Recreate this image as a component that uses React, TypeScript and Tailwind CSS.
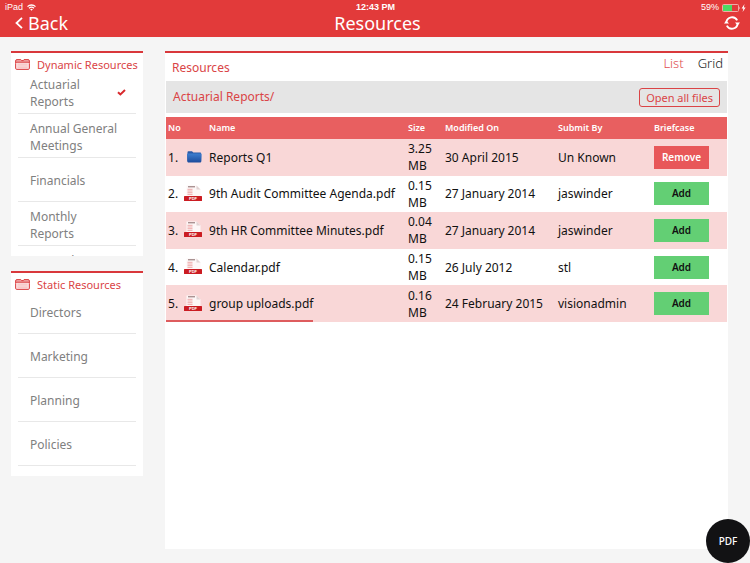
import { useState } from 'react';
import { clsx } from 'clsx';

type FileRow = {
  name: string;
  kind: 'folder' | 'pdf';
  size: string;
  modified: string;
  submitBy: string;
  inBriefcase: boolean;
};

const dynamicItems = ['Actuarial Reports', 'Annual General Meetings', 'Financials', 'Monthly Reports', 'General Documents'];
const staticItems = ['Directors', 'Marketing', 'Planning', 'Policies'];

const initialFiles: FileRow[] = [
  { name: 'Reports Q1', kind: 'folder', size: '3.25 MB', modified: '30 April 2015', submitBy: 'Un Known', inBriefcase: true },
  { name: '9th Audit Committee Agenda.pdf', kind: 'pdf', size: '0.15 MB', modified: '27 January 2014', submitBy: 'jaswinder', inBriefcase: false },
  { name: '9th HR Committee Minutes.pdf', kind: 'pdf', size: '0.04 MB', modified: '27 January 2014', submitBy: 'jaswinder', inBriefcase: false },
  { name: 'Calendar.pdf', kind: 'pdf', size: '0.15 MB', modified: '26 July 2012', submitBy: 'stl', inBriefcase: false },
  { name: 'group uploads.pdf', kind: 'pdf', size: '0.16 MB', modified: '24 February 2015', submitBy: 'visionadmin', inBriefcase: false },
];

function WifiIcon() {
  return (
    <svg width="9" height="7" viewBox="0 0 18 14" fill="none" stroke="#fff" strokeWidth="2.6">
      <path d="M1 5.2a11.5 11.5 0 0 1 16 0M4 8.6a7.2 7.2 0 0 1 10 0" />
      <path d="M9 13.5 6.2 10.7a4 4 0 0 1 5.6 0z" fill="#fff" stroke="none" />
    </svg>
  );
}

function BatteryIcon() {
  return (
    <svg width="24" height="8" viewBox="0 0 24 8">
      <rect x="0.5" y="0.5" width="16" height="7" rx="1" fill="none" stroke="#f4a9a6" />
      <rect x="1" y="1" width="9" height="6" fill="#4cd964" />
      <path d="M17.5 2.5q1.2 1.5 0 3z" fill="#fff" />
      <path d="M22.5 0 19.6 4.4h1.8L20.6 8l3-4.6h-1.8z" fill="#fff" />
    </svg>
  );
}

function RefreshIcon() {
  return (
    <svg width="16" height="14" viewBox="0 0 16 14" fill="none" stroke="#fff" strokeWidth="1.8">
      <path d="M2.3 6.4A5.8 5.8 0 0 1 13.2 4.4" />
      <path d="M13.7 7.6A5.8 5.8 0 0 1 2.8 9.6" />
      <path d="M0 7.6 2.3 4.4 5 7.6zM11 6.4l2.7 3.2L16 6.4z" fill="#fff" stroke="none" />
    </svg>
  );
}

function CaseIcon() {
  return (
    <svg width="15" height="11" viewBox="0 0 15 11" fill="none" stroke="#da3f41">
      <path d="M.6 4V2Q.6.6 2 .6h3.800l.8 1h1.800l.6-1H13Q14.400.6 14.400 2V4" fill="#f0a5a5" />
      <rect x="0.6" y="3.2" width="13.8" height="7.2" rx="1.2" fill="#fce0e0" />
      <path d="M2.5 5.2h10M2.5 7h10M2.5 8.7h10" stroke="#f3b4b4" strokeWidth="0.7" />
    </svg>
  );
}

function FolderIcon() {
  return (
    <svg width="18" height="18" viewBox="0 0 18 18">
      <defs>
        <linearGradient id="folder" x1="0" y1="0" x2="0" y2="1">
          <stop offset="0" stopColor="#3f7fd0" />
          <stop offset="1" stopColor="#1d4c9c" />
        </linearGradient>
      </defs>
      <path d="M3.500 4.200q0-.9.9-.9h3.600l1.300 1.200h7q.8 0 .8.800V13H3.500z" fill="#2a5ba8" />
      <path d="M3 6.200q0-.8.800-.8h13q.8 0 .8.800l-.3 7.400q0 .8-.8.800H4.100q-.8 0-.8-.8z" fill="url(#folder)" />
    </svg>
  );
}

function PdfIcon() {
  return (
    <svg width="18" height="18" viewBox="0 0 18 18">
      <path d="M2.500.4h10L16.500 4.500V14h-14z" fill="#fdf7f7" />
      <path d="M12.500.4v4.100h4z" fill="#e2d4d4" />
      <path d="M4 1.800h7" stroke="#7a5a5a" strokeWidth="0.9" />
      <path d="M3.500 4.300h5M3.500 6h5M3.500 7.700h5M3.500 9.400h5" stroke="#eda3a3" strokeWidth="0.9" />
      <rect x="0" y="11" width="18" height="5" rx="0.5" fill="#cb1c22" />
      <text x="9" y="15" textAnchor="middle" fontSize="4" fontWeight="700" fill="#fff" fontFamily="Liberation Sans, sans-serif">
        PDF
      </text>
    </svg>
  );
}

type SidePanelProps = {
  title: string;
  items: string[];
  selected: string;
  onSelect: (item: string) => void;
};

function SidePanel({ title, items, selected, onSelect }: SidePanelProps) {
  return (
    <section className="flex flex-col h-[205px] bg-white border-t-2 border-[#d9383b]">
      <h2 className="flex items-center h-[17px] pt-[6px] pl-1 gap-[7px] shrink-0 text-[11px] leading-4 text-[#da4446] whitespace-nowrap">
        <CaseIcon />
        {title}
      </h2>
      <ul className="flex-1 px-[7px] overflow-y-auto [scrollbar-width:none]">
        {items.map((item) => (
          <li key={item} className="h-11 border-b border-[#e8e8e8]">
            <button className="flex items-center justify-between w-full h-full pt-[2px] pl-3 pr-[10px] text-left text-[12px] leading-[17px] text-[#808080]" onClick={() => onSelect(item)}>
              <span className="max-w-[92px]">{item}</span>
              {item === selected && (
                <svg className="shrink-0" width="9" height="7" viewBox="0 0 9 7" fill="none" stroke="#d8282c" strokeWidth="2">
                  <path d="M1 3.2 3.400 5.400 8 1" />
                </svg>
              )}
            </button>
          </li>
        ))}
      </ul>
    </section>
  );
}

export default function App() {
  const [selected, setSelected] = useState('Actuarial Reports');
  const [view, setView] = useState<'list' | 'grid'>('list');
  const [files, setFiles] = useState(initialFiles);

  const toggleBriefcase = (name: string) => {
    setFiles(files.map((f) => (f.name === name ? { ...f, inBriefcase: !f.inBriefcase } : f)));
  };

  return (
    <div className="flex flex-col min-h-screen bg-[#f5f5f5] font-['Noto_Sans',sans-serif]">
      <header className="h-[37px] bg-[#e23a3a] text-white">
        {/* status bar */}
        <div className="grid grid-cols-3 items-center h-[15px] pl-[5px] pr-1 font-['Liberation_Sans',sans-serif] text-[9px] leading-[15px]">
          <div className="flex items-center gap-1">
            iPad <WifiIcon />
          </div>
          <div className="text-center font-bold">12:43 PM</div>
          <div className="flex items-center justify-end gap-[3px]">
            59% <BatteryIcon />
          </div>
        </div>
        {/* nav bar */}
        <div className="grid grid-cols-3 items-center h-4 pl-[15px] pr-[10px]">
          <button className="flex items-center gap-[5px] text-[18px] leading-4">
            <svg width="8" height="12" viewBox="0 0 8 12" fill="none" stroke="#fff" strokeWidth="1.8">
              <path d="M7 .8 1.5 6 7 11.2" />
            </svg>
            Back
          </button>
          <h1 className="text-center text-[18px] leading-4">Resources</h1>
          <button className="justify-self-end" aria-label="Refresh">
            <RefreshIcon />
          </button>
        </div>
      </header>

      <div className="flex flex-1 gap-[22px] pt-[14px] pb-[14px] pl-[11px] pr-[22px]">
        <aside className="flex flex-col gap-[15px] w-[132px] shrink-0">
          <SidePanel title="Dynamic Resources" items={dynamicItems} selected={selected} onSelect={setSelected} />
          <SidePanel title="Static Resources" items={staticItems} selected={selected} onSelect={setSelected} />
        </aside>

        <main className="flex-1 px-px bg-white border-t-2 border-[#d9383b]">
          <div className="flex justify-between h-7 pl-[6px] pr-1">
            <h2 className="pt-[6px] text-[12px] leading-[18px] text-[#da4446]">Resources</h2>
            <div className="flex items-start gap-[14px] pt-px text-[13px] leading-[18px] font-light">
              <button className={view === 'list' ? 'text-[#e04c50]' : 'text-[#222]'} onClick={() => setView('list')}>
                List
              </button>
              <button className={view === 'grid' ? 'text-[#e04c50]' : 'text-[#222]'} onClick={() => setView('grid')}>
                Grid
              </button>
            </div>
          </div>

          <div className="flex items-center justify-between h-8 mb-1 pl-[7px] pr-[7px] bg-[#e5e5e5] text-[#da4446]">
            <span className="text-[12px]">Actuarial Reports/</span>
            <button className="h-[19px] px-[6px] border border-[#da4446] rounded-[3px] text-[11px] leading-[17px]">Open all files</button>
          </div>

          <table className="w-full h-[205px] table-fixed text-left text-[12px] leading-[17px] text-[#111]">
            <colgroup>
              <col className="w-[18px]" />
              <col className="w-[24px]" />
              <col />
              <col className="w-[37px]" />
              <col className="w-[113px]" />
              <col className="w-[96px]" />
              <col className="w-[75px]" />
            </colgroup>
            <thead>
              <tr className="h-[22px] bg-[#e85f60] text-[9px] leading-3 text-white">
                <th className="pl-[2px] font-semibold" colSpan={2}>No</th>
                <th className="pl-px font-semibold">Name</th>
                <th className="pl-[2px] font-semibold">Size</th>
                <th className="pl-[2px] font-semibold">Modified On</th>
                <th className="pl-[2px] font-semibold">Submit By</th>
                <th className="pl-[2px] font-semibold">Briefcase</th>
              </tr>
            </thead>
            <tbody>
              {files.map((file, i) => (
                <tr key={file.name} className="odd:bg-[#f9d7d7] whitespace-nowrap">
                  <td className="pl-[2px]">{i + 1}.</td>
                  <td>{file.kind === 'folder' ? <FolderIcon /> : <PdfIcon />}</td>
                  <td className="pl-px">{file.name}</td>
                  <td className="pl-[2px] whitespace-normal">{file.size}</td>
                  <td className="pl-[2px]">{file.modified}</td>
                  <td className="pl-[2px]">{file.submitBy}</td>
                  <td className="pl-[2px]">
                    <button
                      className={clsx('block w-[55px] h-[23px] text-[10px] font-semibold', file.inBriefcase ? 'bg-[#e85759] text-white' : 'bg-[#63cf74] text-[#111]')}
                      onClick={() => toggleBriefcase(file.name)}
                    >
                      {file.inBriefcase ? 'Remove' : 'Add'}
                    </button>
                  </td>
                </tr>
              ))}
            </tbody>
          </table>
          <div className="w-[147px] h-[2px] -mt-[2px] bg-[#de5c5e]" />
        </main>
      </div>

      <button className="fixed right-0 bottom-0 size-11 rounded-full bg-[#121214] text-[10px] font-medium text-white">PDF</button>
    </div>
  );
}
